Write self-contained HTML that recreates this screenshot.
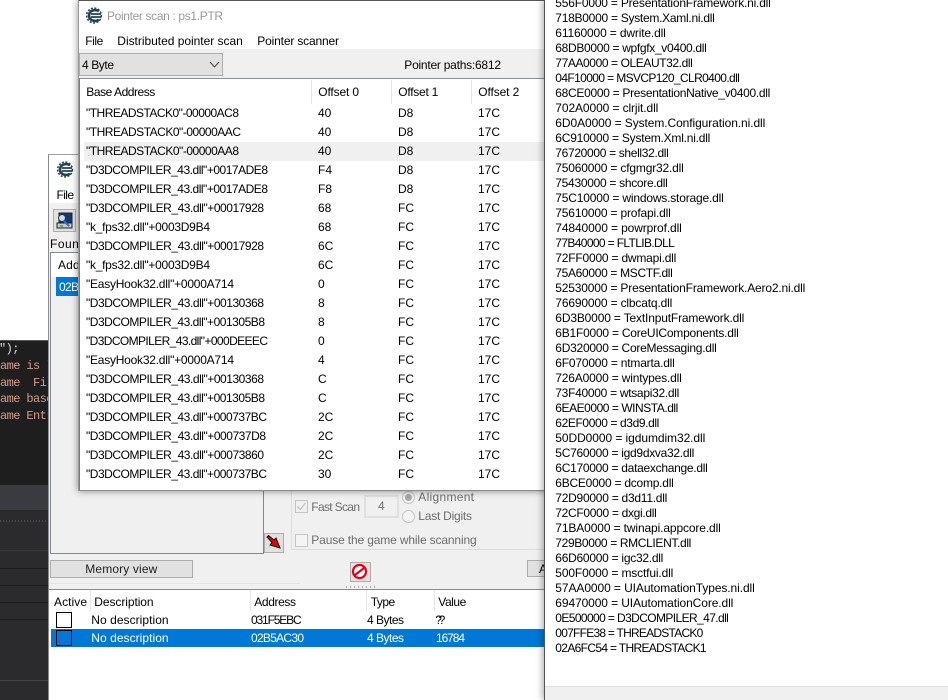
<!DOCTYPE html>
<html><head><meta charset="utf-8"><style>
html,body{margin:0;padding:0;background:#fff}
#r{position:relative;width:948px;height:700px;overflow:hidden;background:#fff;font-family:"Liberation Sans",sans-serif;font-size:12px;color:#000}
#r div{position:absolute;white-space:nowrap;box-sizing:border-box}
#r svg.t{position:absolute;left:0;top:0;font-family:"Liberation Sans",sans-serif;font-size:12px}
.hs{width:1px;height:24px;background:#e5e5e5}
.c{font-family:"Liberation Mono",monospace;font-size:12px;letter-spacing:-.6px;color:#d69d85;line-height:17px}
.ln{left:0;width:49px;height:1px;background:#1c1c1c}
.g{fill:#6d6d6d}.w{fill:#fff}
</style></head><body><div id="r">

<!-- dark editor -->
<div style="left:0;top:340px;width:49px;height:360px;background:#2b2b2d"></div>
<div style="left:0;top:340px;width:49px;height:1px;background:#555"></div>
<div style="left:0;top:341px;width:49px;height:144px;background:#1e1e1e"></div>
<div style="left:0;top:485px;width:49px;height:25px;background:#3a3b40"></div>
<div style="left:0;top:520px;width:49px;height:2px;background:repeating-linear-gradient(90deg,#484848 0 1px,#2b2b2d 1px 3px)"></div>
<div class="ln" style="top:550px;background:#3a3a3c"></div>
<div class="ln" style="top:568px"></div><div class="ln" style="top:585px"></div><div class="ln" style="top:602px"></div><div class="ln" style="top:619px"></div>
<div class="ln" style="top:680px;background:#444"></div>
<div class="c" style="top:341px;left:-1px;color:#ddd">");</div>
<div class="c" style="top:358px;left:-6.6px">Name is "</div>
<div class="c" style="top:375px;left:-6.6px">Name&nbsp;&nbsp;File</div>
<div class="c" style="top:391px;left:-6.6px">Name base</div>
<div class="c" style="top:408px;left:-6.6px">Name Entry</div>

<!-- back window -->
<div style="left:48px;top:154px;width:500px;height:546px;background:#f0f0f0;border-left:1px solid #8a8a8a;border-top:1px solid #a0a0a0"></div>
<div style="left:49px;top:155px;width:490px;height:48px;background:#fff"></div>
<svg style="position:absolute;left:55px;top:160px" width="20" height="20" viewBox="0 0 20 20"><circle cx="10" cy="9.500" r="7.400" fill="none" stroke="#1d4358" stroke-width="1.500" stroke-dasharray="2 1.500"/><path d="M15 5.200C11 2.800 5 4.500 5 9.500C5 14.500 11 16.200 15 13.800" fill="none" stroke="#1d4358" stroke-width="2.600"/><path d="M7 8H17M7 11H17" stroke="#1d4358" stroke-width="1.800"/></svg>
<div style="left:53px;top:209px;width:23px;height:23px;background:#e1e1e1;border:1px solid #adadad"></div>
<svg style="position:absolute;left:55px;top:211px" width="19" height="19" viewBox="0 0 19 19"><rect x="4" y="2" width="13" height="10" fill="#123a6b" stroke="#222"/><rect x="2" y="12" width="15" height="5" fill="#c8c8c8" stroke="#222"/><circle cx="7" cy="7" r="3.500" fill="#bfe0ff" stroke="#333"/><path d="M9 10l5 5" stroke="#2a6de0" stroke-width="2"/><path d="M5 15h3" stroke="#2fae3a" stroke-width="1.500"/></svg>
<div style="left:50px;top:252px;width:214px;height:302px;border:1px solid #828790;background:#f0f0f0"></div>
<div style="left:51px;top:253px;width:40px;height:24px;background:#fff"></div>
<div style="left:56px;top:277px;width:24px;height:19px;background:#0078d7"></div>
<div style="left:264px;top:533px;width:20px;height:20px;background:#e1e1e1;border:1px solid #adadad"></div>
<svg style="position:absolute;left:266px;top:535px" width="16" height="16" viewBox="0 0 16 16"><path d="M1 2L2.500 .5L8 5L10 3L14 13L4 10L6 7.500Z" fill="#e60000" stroke="#111" stroke-width="1"/></svg>
<div style="left:291px;top:485px;width:270px;height:65px;border:1px solid #dcdcdc"></div>
<div style="left:295px;top:500px;width:13px;height:13px;border:1px solid #c4c4c4;background:#f0f0f0"></div>
<svg style="position:absolute;left:296px;top:501px" width="11" height="11" viewBox="0 0 11 11"><path d="M1.500 5.500L4.300 8.500L9.500 2" fill="none" stroke="#c4c4c4" stroke-width="1.300"/></svg>
<div style="left:364px;top:495px;width:35px;height:23px;border:2px solid #e0e0e0"></div>
<div style="left:402px;top:491px;width:13px;height:13px;border:1px solid #c4c4c4;border-radius:50%;background:#f0f0f0"></div>
<div style="left:405px;top:494px;width:7px;height:7px;border-radius:50%;background:#a8a8a8"></div>
<div style="left:402px;top:510px;width:13px;height:13px;border:1px solid #c4c4c4;border-radius:50%;background:#f4f4f4"></div>
<div style="left:295px;top:534px;width:13px;height:13px;border:1px solid #c4c4c4;background:#f4f4f4"></div>
<div style="left:50px;top:560px;width:143px;height:18px;background:#e1e1e1;border:1px solid #adadad"></div>
<div style="left:350px;top:562px;width:21px;height:20px;background:#e1e1e1;border:1px solid #adadad"></div>
<svg style="position:absolute;left:351px;top:563px" width="17" height="17" viewBox="0 0 17 17"><circle cx="8.500" cy="8.500" r="6.500" fill="#fff" stroke="#e60012" stroke-width="2.200"/><path d="M4 12L13 5" stroke="#e60012" stroke-width="2.200"/></svg>
<div style="left:527px;top:560px;width:40px;height:17px;background:#e1e1e1;border:1px solid #adadad"></div>
<div style="left:50px;top:583px;width:250px;height:1px;background:#e4e4e4"></div>
<div style="left:346px;top:586px;width:30px;height:2px;background:repeating-linear-gradient(90deg,#aaa 0 1px,#f0f0f0 1px 4px)"></div>
<div style="left:49px;top:589px;width:500px;height:111px;background:#fff;border-top:1px solid #8a8a8a"></div>
<div class="hs" style="left:90px;top:590px;height:21px"></div><div class="hs" style="left:250px;top:590px;height:21px"></div><div class="hs" style="left:366px;top:590px;height:21px"></div><div class="hs" style="left:434px;top:590px;height:21px"></div>
<div style="left:56px;top:612px;width:16px;height:16px;border:1px solid #000;background:#fff"></div>
<div style="left:51px;top:629px;width:494px;height:18px;background:#0078d7"></div>
<div style="left:56px;top:630px;width:16px;height:16px;border:1px solid #000"></div>

<svg class="t" width="948" height="700">
<text x="56.500" y="199" textLength="17.500">File</text>
<text x="50" y="248" textLength="36">Found</text>
<text x="58" y="269" textLength="45">Address</text>
<text x="59" y="291" class="w" textLength="20">02B</text>
<text x="311.300" y="511" class="g" textLength="48.700">Fast Scan</text>
<text x="378" y="510" class="g">4</text>
<text x="418.300" y="501" class="g" textLength="55.700">Alignment</text>
<text x="418.300" y="520" class="g" textLength="53.700">Last Digits</text>
<text x="311.300" y="544" class="g" textLength="165.400">Pause the game while scanning</text>
<text x="85.300" y="573" fill="#222" textLength="72">Memory view</text>
<text x="539" y="573">A</text>
<text x="54" y="606" textLength="33">Active</text>
<text x="94.300" y="606" textLength="59.300">Description</text>
<text x="254.300" y="606" textLength="41.700">Address</text>
<text x="370.700" y="606" textLength="24.500">Type</text>
<text x="438.300" y="606" textLength="28">Value</text>
<text x="91.300" y="624" textLength="77.300">No description</text>
<text x="251" y="624" textLength="50.700">031F5EBC</text>
<text x="367" y="624" textLength="37">4 Bytes</text>
<text x="435.300" y="624" textLength="10">??</text>
<text x="91.300" y="642" class="w" textLength="77.300">No description</text>
<text x="251" y="642" class="w" textLength="53">02B5AC30</text>
<text x="367" y="642" class="w" textLength="37">4 Bytes</text>
<text x="436" y="642" class="w" textLength="29">16784</text>
</svg>

<!-- pointer scan window -->
<div style="left:78px;top:0;width:470px;height:491px;background:#fff;box-shadow:0 0 7px rgba(0,0,0,.45);border-top:1px solid #555;border-left:1px solid #9a9a9a;border-bottom:1px solid #8a8a8a"></div>
<svg style="position:absolute;left:84px;top:6px" width="20" height="20" viewBox="0 0 20 20"><circle cx="10" cy="9.500" r="7.400" fill="none" stroke="#1d4358" stroke-width="1.500" stroke-dasharray="2 1.500"/><path d="M15 5.200C11 2.800 5 4.500 5 9.500C5 14.500 11 16.200 15 13.800" fill="none" stroke="#1d4358" stroke-width="2.600"/><path d="M7 8H17M7 11H17" stroke="#1d4358" stroke-width="1.800"/></svg>
<div style="left:79px;top:49px;width:470px;height:30px;background:#f0f0f0;border-bottom:1px solid #8a9096"></div>
<div style="left:79px;top:53px;width:144px;height:23px;background:#e1e1e1;border:1px solid #adadad"></div>
<svg style="position:absolute;left:209px;top:61px" width="11" height="8" viewBox="0 0 11 8"><path d="M1 1L5.500 6L10 1" fill="none" stroke="#444" stroke-width="1"/></svg>
<div style="left:79px;top:79px;width:1px;height:411px;background:#7a7a7a"></div>
<div class="hs" style="left:311px;top:80px"></div><div class="hs" style="left:391px;top:80px"></div><div class="hs" style="left:471px;top:80px"></div>
<div style="left:84px;top:142px;width:461px;height:19px;background:#f0f0f0"></div>
<div style="left:318px;top:104px;line-height:19px">40<br>40<br>40<br>F4<br>F8<br>68<br>68<br>6C<br>6C<br>0<br>8<br>8<br>0<br>4<br>C<br>C<br>2C<br>2C<br>2C<br>30</div>
<div style="left:398px;top:104px;line-height:19px">D8<br>D8<br>D8<br>D8<br>D8<br>FC<br>FC<br>FC<br>FC<br>FC<br>FC<br>FC<br>FC<br>FC<br>FC<br>FC<br>FC<br>FC<br>FC<br>FC</div>
<div style="left:478px;top:104px;line-height:19px">17C<br>17C<br>17C<br>17C<br>17C<br>17C<br>17C<br>17C<br>17C<br>17C<br>17C<br>17C<br>17C<br>17C<br>17C<br>17C<br>17C<br>17C<br>17C<br>17C</div>
<svg class="t" width="948" height="700">
<text x="107" y="20" fill="#999" textLength="116">Pointer scan : ps1.PTR</text>
<text x="85.300" y="45" textLength="18">File</text>
<text x="117.300" y="45" textLength="125.500">Distributed pointer scan</text>
<text x="257.300" y="45" textLength="81.700">Pointer scanner</text>
<text x="82" y="69" textLength="32">4 Byte</text>
<text x="404.300" y="69" textLength="96.700">Pointer paths:6812</text>
<text x="86.300" y="96" textLength="69">Base Address</text>
<text x="318.300" y="96" textLength="40.700">Offset 0</text>
<text x="398.300" y="96" textLength="40">Offset 1</text>
<text x="478.300" y="96" textLength="41">Offset 2</text>
<g transform="translate(0,-1)">
<text x="86" y="118" textLength="153">"THREADSTACK0"-00000AC8</text>
<text x="86" y="137" textLength="155">"THREADSTACK0"-00000AAC</text>
<text x="86" y="156" textLength="153">"THREADSTACK0"-00000AA8</text>
<text x="86" y="175" textLength="182">"D3DCOMPILER_43.dll"+0017ADE8</text>
<text x="86" y="194" textLength="182">"D3DCOMPILER_43.dll"+0017ADE8</text>
<text x="86" y="213" textLength="178">"D3DCOMPILER_43.dll"+00017928</text>
<text x="86" y="232" textLength="124">"k_fps32.dll"+0003D9B4</text>
<text x="86" y="251" textLength="178">"D3DCOMPILER_43.dll"+00017928</text>
<text x="86" y="270" textLength="124">"k_fps32.dll"+0003D9B4</text>
<text x="86" y="289" textLength="148">"EasyHook32.dll"+0000A714</text>
<text x="86" y="308" textLength="178">"D3DCOMPILER_43.dll"+00130368</text>
<text x="86" y="327" textLength="179">"D3DCOMPILER_43.dll"+001305B8</text>
<text x="86" y="346" textLength="182">"D3DCOMPILER_43.dll"+000DEEEC</text>
<text x="86" y="365" textLength="148">"EasyHook32.dll"+0000A714</text>
<text x="86" y="384" textLength="178">"D3DCOMPILER_43.dll"+00130368</text>
<text x="86" y="403" textLength="179">"D3DCOMPILER_43.dll"+001305B8</text>
<text x="86" y="422" textLength="181">"D3DCOMPILER_43.dll"+000737BC</text>
<text x="86" y="441" textLength="180">"D3DCOMPILER_43.dll"+000737D8</text>
<text x="86" y="460" textLength="178">"D3DCOMPILER_43.dll"+00073860</text>
<text x="86" y="479" textLength="181">"D3DCOMPILER_43.dll"+000737BC</text>
</g>
</svg>

<!-- right panel -->
<div style="left:544px;top:0;width:404px;height:700px;background:#fff;border-left:1px solid #555;box-shadow:-2px 0 6px rgba(0,0,0,.3)"></div>
<div style="left:545px;top:686px;width:403px;height:14px;background:#f0f0f0;border-top:1px solid #ddd"></div>
<svg class="t" width="948" height="700">
<g transform="translate(0,-1)">
<text x="555.300" y="8" textLength="215.500">556F0000 = PresentationFramework.ni.dll</text>
<text x="555.300" y="23" textLength="159.500">718B0000 = System.Xaml.ni.dll</text>
<text x="555.300" y="38" textLength="110.500">61160000 = dwrite.dll</text>
<text x="555.300" y="53" textLength="151.500">68DB0000 = wpfgfx_v0400.dll</text>
<text x="555.300" y="68" textLength="137.500">77AA0000 = OLEAUT32.dll</text>
<text x="555.300" y="83" textLength="184.500">04F10000 = MSVCP120_CLR0400.dll</text>
<text x="555.300" y="98" textLength="215">68CE0000 = PresentationNative_v0400.dll</text>
<text x="555.300" y="113" textLength="103">702A0000 = clrjit.dll</text>
<text x="555.300" y="128" textLength="210">6D0A0000 = System.Configuration.ni.dll</text>
<text x="555.300" y="143" textLength="155">6C910000 = System.Xml.ni.dll</text>
<text x="555.300" y="158" textLength="113.500">76720000 = shell32.dll</text>
<text x="555.300" y="173" textLength="128.500">75060000 = cfgmgr32.dll</text>
<text x="555.300" y="188" textLength="112.500">75430000 = shcore.dll</text>
<text x="555.300" y="203" textLength="168.500">75C10000 = windows.storage.dll</text>
<text x="555.300" y="218" textLength="115.500">75610000 = profapi.dll</text>
<text x="555.300" y="233" textLength="126.500">74840000 = powrprof.dll</text>
<text x="555.300" y="248" textLength="119.500">77B40000 = FLTLIB.DLL</text>
<text x="555.300" y="263" textLength="121">72FF0000 = dwmapi.dll</text>
<text x="555.300" y="278" textLength="117.500">75A60000 = MSCTF.dll</text>
<text x="555.300" y="293" textLength="250">52530000 = PresentationFramework.Aero2.ni.dll</text>
<text x="555.300" y="308" textLength="117">76690000 = clbcatq.dll</text>
<text x="555.300" y="323" textLength="189">6D3B0000 = TextInputFramework.dll</text>
<text x="555.300" y="338" textLength="183.500">6B1F0000 = CoreUIComponents.dll</text>
<text x="555.300" y="353" textLength="161.500">6D320000 = CoreMessaging.dll</text>
<text x="555.300" y="368" textLength="119.500">6F070000 = ntmarta.dll</text>
<text x="555.300" y="383" textLength="126.500">726A0000 = wintypes.dll</text>
<text x="555.300" y="398" textLength="124">73F40000 = wtsapi32.dll</text>
<text x="555.300" y="413" textLength="123">6EAE0000 = WINSTA.dll</text>
<text x="555.300" y="428" textLength="104">62EF0000 = d3d9.dll</text>
<text x="555.300" y="443" textLength="150">50DD0000 = igdumdim32.dll</text>
<text x="555.300" y="458" textLength="139">5C760000 = igd9dxva32.dll</text>
<text x="555.300" y="473" textLength="152.500">6C170000 = dataexchange.dll</text>
<text x="555.300" y="488" textLength="118.500">6BCE0000 = dcomp.dll</text>
<text x="555.300" y="503" textLength="112">72D90000 = d3d11.dll</text>
<text x="555.300" y="518" textLength="101.500">72CF0000 = dxgi.dll</text>
<text x="555.300" y="533" textLength="165.500">71BA0000 = twinapi.appcore.dll</text>
<text x="555.300" y="548" textLength="136">729B0000 = RMCLIENT.dll</text>
<text x="555.300" y="563" textLength="108">66D60000 = igc32.dll</text>
<text x="555.300" y="578" textLength="118">500F0000 = msctfui.dll</text>
<text x="555.300" y="593" textLength="199.500">57AA0000 = UIAutomationTypes.ni.dll</text>
<text x="555.300" y="608" textLength="178">69470000 = UIAutomationCore.dll</text>
<text x="555.300" y="623" textLength="173.500">0E500000 = D3DCOMPILER_47.dll</text>
<text x="555.300" y="638" textLength="148">007FFE38 = THREADSTACK0</text>
<text x="555.300" y="653" textLength="151.300">02A6FC54 = THREADSTACK1</text>
</g>
</svg>
</div></body></html>
